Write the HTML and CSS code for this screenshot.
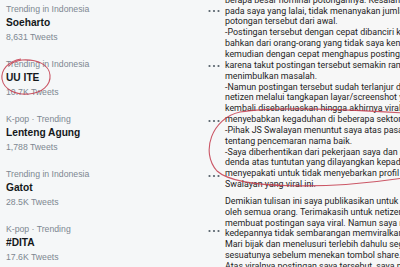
FILE: index.html
```html
<!DOCTYPE html>
<html lang="en">
<head>
    <meta charset="UTF-8">
    <meta name="viewport" content="width=device-width, initial-scale=1.0">
    <title>Trending - UU ITE</title>
    <link rel="stylesheet" href="styles.css">
</head>
<body>

    <div class="shot">
        <!-- Trends list -->
        <div class="trends">
            <div class="trend">
                <div class="trend-info">
                    <div class="trend-label">Trending in Indonesia</div>
                    <div class="trend-name">Soeharto</div>
                    <div class="trend-count">8,631 Tweets</div>
                </div>
                <svg class="trend-more" width="12" height="4" viewBox="0 0 12 4"><circle cx="1.5" cy="2" r="1.1"/><circle cx="6" cy="2" r="1.1"/><circle cx="10.5" cy="2" r="1.1"/></svg>
            </div>
            <div class="trend">
                <div class="trend-info">
                    <div class="trend-label">Trending in Indonesia</div>
                    <div class="trend-name">UU ITE</div>
                    <div class="trend-count">10.7K Tweets</div>
                </div>
                <svg class="trend-more" width="12" height="4" viewBox="0 0 12 4"><circle cx="1.5" cy="2" r="1.1"/><circle cx="6" cy="2" r="1.1"/><circle cx="10.5" cy="2" r="1.1"/></svg>
            </div>
            <div class="trend">
                <div class="trend-info">
                    <div class="trend-label">K-pop · Trending</div>
                    <div class="trend-name">Lenteng Agung</div>
                    <div class="trend-count">1,788 Tweets</div>
                </div>
                <svg class="trend-more" width="12" height="4" viewBox="0 0 12 4"><circle cx="1.5" cy="2" r="1.1"/><circle cx="6" cy="2" r="1.1"/><circle cx="10.5" cy="2" r="1.1"/></svg>
            </div>
            <div class="trend">
                <div class="trend-info">
                    <div class="trend-label">Trending in Indonesia</div>
                    <div class="trend-name">Gatot</div>
                    <div class="trend-count">28.5K Tweets</div>
                </div>
                <svg class="trend-more" width="12" height="4" viewBox="0 0 12 4"><circle cx="1.5" cy="2" r="1.1"/><circle cx="6" cy="2" r="1.1"/><circle cx="10.5" cy="2" r="1.1"/></svg>
            </div>
            <div class="trend">
                <div class="trend-info">
                    <div class="trend-label">K-pop · Trending</div>
                    <div class="trend-name">#DITA</div>
                    <div class="trend-count">17.6K Tweets</div>
                </div>
                <svg class="trend-more" width="12" height="4" viewBox="0 0 12 4"><circle cx="1.5" cy="2" r="1.1"/><circle cx="6" cy="2" r="1.1"/><circle cx="10.5" cy="2" r="1.1"/></svg>
            </div>
        </div>

        <!-- Post text -->
        <div class="post">
            <div class="post-text">
                <p class="para">
                    <span>berapa besar nominal potongannya. Kesalahan ada</span>
                    <span>pada saya yang lalai, tidak menanyakan jumlah</span>
                    <span>potongan tersebut dari awal.</span>
                    <span>-Postingan tersebut dengan cepat dibanciri komentar</span>
                    <span>bahkan dari orang-orang yang tidak saya kenal,</span>
                    <span>kemudian dengan cepat menghapus postingan</span>
                    <span>karena takut postingan tersebut semakin ramai dan</span>
                    <span>menimbulkan masalah.</span>
                    <span>-Namun postingan tersebut sudah terlanjur diambil</span>
                    <span>netizen melalui tangkapan layar/screenshot yang</span>
                    <span>kembali disebarluaskan hingga akhirnya viral dan</span>
                    <span>menyebabkan kegaduhan di beberapa sektor.</span>
                    <span>-Pihak JS Swalayan menuntut saya atas pasal UU ITE</span>
                    <span>tentang pencemaran nama baik.</span>
                    <span>-Saya diberhentikan dari pekerjaan saya dan membayar</span>
                    <span>denda atas tuntutan yang dilayangkan kepada saya</span>
                    <span>menyepakati untuk tidak menyebarkan profil dari JS</span>
                    <span>Swalayan yang viral ini.</span>
                </p>
                <p class="para">
                    <span>Demikian tulisan ini saya publikasikan untuk dapat</span>
                    <span>oleh semua orang. Terimakasih untuk netizen yang</span>
                    <span>membuat postingan saya viral. Namun saya mohon</span>
                    <span>kedepannya tidak sembarangan memviralkan sesuatu.</span>
                    <span>Mari bijak dan menelusuri terlebih dahulu segala</span>
                    <span>sesuatunya sebelum menekan tombol share.</span>
                    <span>Atas viralnya postingan saya tersebut, saya mohon</span>
                </p>
            </div>
        </div>

        <!-- hand drawn marks over the picture -->
        <svg class="marks" width="400" height="267" viewBox="0 0 400 267">
            <path d="M21 59 C8 61 1 70 2 79 C4 90 16 95 29 94 C42 93 51 85 50 75 C49 65 38 59 22 60 C16 61 11 63 9 66"/>
            <path d="M403 113 C340 109 270 107 240 112 C212 118 200 152 217 171 C238 190 330 189 403 178"/>
        </svg>
    </div>

</body>
</html>
```

FILE: styles.css
```css
body {
    margin: 0;
    padding: 0;
    background-color: #f6f7f8;
}

.shot {
    position: relative;
    display: flex;
    width: 400px;
    height: 267px;
    overflow: hidden;
}

.trends {
    flex: none;
    width: 222px;
    background-color: #f5f7f8;
    font-family: "Liberation Sans", Arial, sans-serif;
}

.trend {
    display: flex;
    justify-content: space-between;
    align-items: flex-start;
    height: 55px;
    padding: 3px 2px 0 6px;
    box-sizing: border-box;
}

.trend-label,
.trend-count {
    font-size: 8.7px;
    line-height: 12px;
    color: #7d8791;
}

.trend-name {
    font-size: 10.2px;
    font-weight: bold;
    line-height: 15px;
    color: #14171a;
}

.trend-count {
    line-height: 14px;
}

.trend-more {
    margin-top: 6px;
    fill: #56616b;
}

.post {
    flex: 1;
    overflow: hidden;
    padding-left: 3px;
    background-color: #f7f7f7;
    font-family: Roboto, "Liberation Sans", sans-serif;
    font-size: 8.9px;
    line-height: 10.85px;
    color: #242424;
}

.post-text {
    margin-top: -5.25px;
}

.para {
    margin: 0 0 6px 0;
}

.para span {
    display: block;
    white-space: nowrap;
}

/* Red annotation marks */
.marks {
    position: absolute;
    left: 0;
    top: 0;
    fill: none;
    stroke: #c43a4c;
    stroke-width: 1.1;
    opacity: 0.85;
    pointer-events: none;
}
```
